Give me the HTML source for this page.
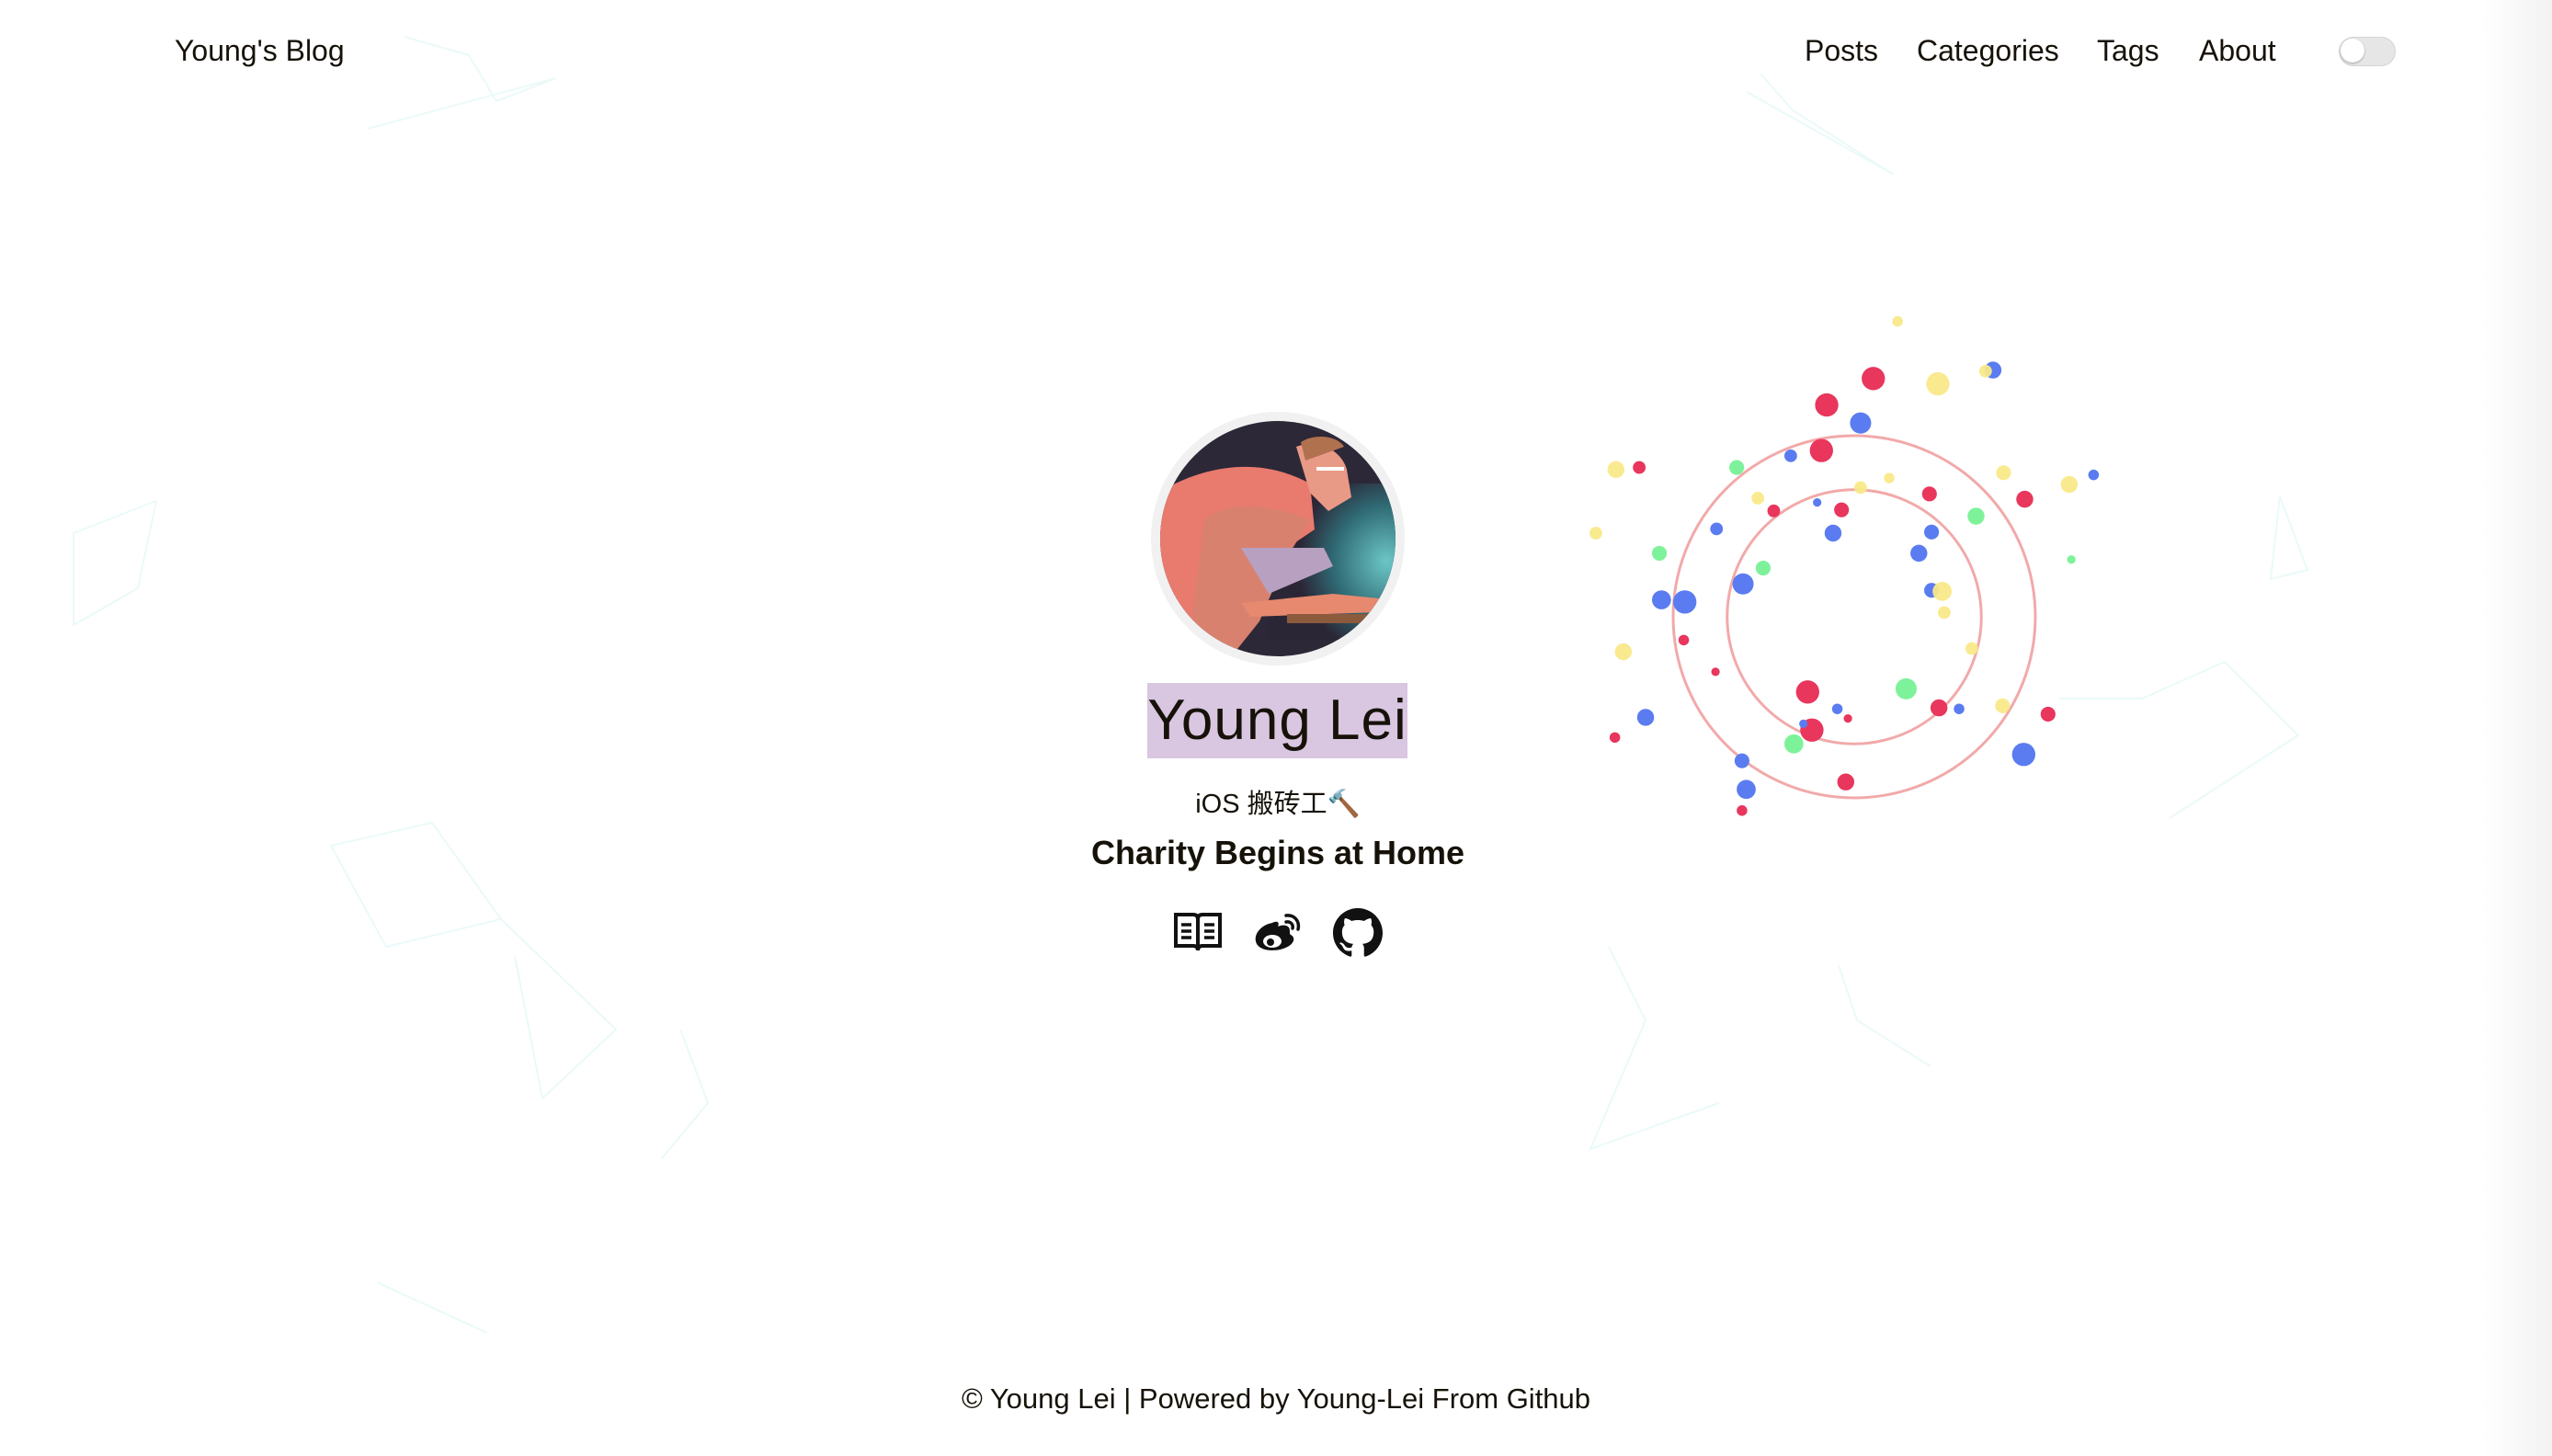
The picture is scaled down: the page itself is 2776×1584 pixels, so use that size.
<!DOCTYPE html>
<html><head><meta charset="utf-8"><style>
html,body{margin:0;padding:0}
body{width:2776px;height:1584px;position:relative;overflow:hidden;background:linear-gradient(90deg,#fff 0,#fff 2700px,#f2f2f2 2776px);font-family:"Liberation Sans","Noto Sans CJK SC",sans-serif;color:#161209}
.t{position:absolute;white-space:nowrap}
.nav{top:37px;font-size:32px;color:#161209}
</style></head><body>
<svg class="t" style="left:0;top:0" width="2776" height="1584">
<g stroke="#e6f8f8" stroke-width="2" fill="none" opacity="0.8">
<path d="M440 40L510 60L540 110L605 85L400 140"/><path d="M80 580L170 545L150 640L80 680Z"/><path d="M360 920L470 895L545 1000L420 1030Z"/>
<path d="M545 1000L670 1120L590 1195L560 1040"/><path d="M2240 760L2330 760L2420 720L2500 800L2360 890"/>
<path d="M1915 80L1950 120L2060 190L1900 100"/><path d="M1750 1030L1790 1110L1730 1250L1870 1200"/><path d="M2000 1050L2020 1110L2100 1160"/>
<path d="M410 1395L530 1450"/><path d="M2480 540L2510 620L2470 630Z"/><path d="M740 1120L770 1200L720 1260"/>
</g>
<g transform="translate(2017,671) scale(1.152) translate(-1975,-647)">
<g fill="none" stroke="#f2a9a9" stroke-width="2.6"><circle cx="1975" cy="647" r="171"/><circle cx="1975" cy="647" r="120"/></g>
<g fill="#e8365d"><circle cx="1993" cy="422" r="11"/><circle cx="1949" cy="447" r="11"/><circle cx="1944" cy="490" r="11"/><circle cx="1772" cy="506" r="6"/><circle cx="1899" cy="547" r="6"/><circle cx="1963" cy="546" r="7"/><circle cx="2046" cy="531" r="7"/><circle cx="2136" cy="536" r="8"/><circle cx="1814" cy="669" r="5"/><circle cx="1844" cy="699" r="4"/><circle cx="1931" cy="718" r="11"/><circle cx="1935" cy="754" r="11"/><circle cx="1969" cy="743" r="4"/><circle cx="2055" cy="733" r="8"/><circle cx="2158" cy="739" r="7"/><circle cx="1749" cy="761" r="5"/><circle cx="1967" cy="803" r="8"/><circle cx="1869" cy="830" r="5"/></g>
<g fill="#5b7cf0"><circle cx="1981" cy="464" r="10"/><circle cx="1915" cy="495" r="6"/><circle cx="2106" cy="414" r="8"/><circle cx="2201" cy="513" r="5"/><circle cx="1940" cy="539" r="4"/><circle cx="1955" cy="568" r="8"/><circle cx="1845" cy="564" r="6"/><circle cx="2048" cy="567" r="7"/><circle cx="2036" cy="587" r="8"/><circle cx="1870" cy="616" r="10"/><circle cx="1793" cy="631" r="9"/><circle cx="1815" cy="633" r="11"/><circle cx="2048" cy="622" r="7"/><circle cx="1959" cy="734" r="5"/><circle cx="1927" cy="748" r="4"/><circle cx="2074" cy="734" r="5"/><circle cx="1778" cy="742" r="8"/><circle cx="2135" cy="777" r="11"/><circle cx="1869" cy="783" r="7"/><circle cx="1873" cy="810" r="9"/></g>
<g fill="#f9e98a" opacity="0.95"><circle cx="2016" cy="368" r="5"/><circle cx="2054" cy="427" r="11"/><circle cx="2099" cy="415" r="6"/><circle cx="1750" cy="508" r="8"/><circle cx="2008" cy="516" r="5"/><circle cx="1981" cy="525" r="6"/><circle cx="2116" cy="511" r="7"/><circle cx="2178" cy="522" r="8"/><circle cx="1884" cy="535" r="6"/><circle cx="1731" cy="568" r="6"/><circle cx="2058" cy="623" r="9"/><circle cx="2060" cy="643" r="6"/><circle cx="1757" cy="680" r="8"/><circle cx="2086" cy="677" r="6"/><circle cx="2115" cy="731" r="7"/></g>
<g fill="#7ef29a"><circle cx="1864" cy="506" r="7"/><circle cx="1791" cy="587" r="7"/><circle cx="1889" cy="601" r="7"/><circle cx="2090" cy="552" r="8"/><circle cx="2180" cy="593" r="4"/><circle cx="2024" cy="715" r="10"/><circle cx="1918" cy="767" r="9"/></g>
</g>
</svg>

<div class="t" style="left:190px;top:37px;font-size:32px">Young's Blog</div>
<div class="t nav" style="left:1963px">Posts</div>
<div class="t nav" style="left:2085px">Categories</div>
<div class="t nav" style="left:2281px">Tags</div>
<div class="t nav" style="left:2392px">About</div>
<div class="t" style="left:2544px;top:40px;width:60px;height:30px;border-radius:16px;background:#e6e6e6;border:1px solid #d4d4d4"></div>
<div class="t" style="left:2546px;top:42px;width:26px;height:26px;border-radius:50%;background:#fff;box-shadow:0 1px 2px rgba(0,0,0,.3)"></div>

<svg class="t" style="left:1250px;top:446px" width="280" height="280" viewBox="0 0 280 280">
<defs><clipPath id="c"><circle cx="140" cy="140" r="128"/></clipPath>
<radialGradient id="g" cx="0.8" cy="0.5" r="0.6"><stop offset="0" stop-color="#6cc6c6"/><stop offset="0.6" stop-color="#2f6a74"/><stop offset="1" stop-color="#2b2636"/></radialGradient></defs>
<circle cx="140" cy="140" r="138" fill="#f1f1f1"/>
<g clip-path="url(#c)"><rect width="280" height="280" fill="#2c2837"/>
<rect x="130" y="80" width="160" height="170" fill="url(#g)"/>
<path d="M10 90C60 60 120 50 175 80L180 130C150 150 120 170 100 200L60 250L10 240Z" fill="#e97a6e"/>
<path d="M60 120C80 100 130 100 175 120L150 160L120 230L80 280L40 280Z" fill="#d9816f"/>
<path d="M100 150L190 150 L200 170L130 200Z" fill="#b7a0c0"/>
<path d="M160 40C185 30 210 45 215 65L220 95L195 110L175 90Z" fill="#e99a86"/>
<path d="M165 35C180 25 205 28 212 40L170 55Z" fill="#b0714f"/>
<rect x="182" y="62" width="30" height="4" fill="#fff"/>
<path d="M100 210L200 200L250 205L250 220L110 225Z" fill="#e7896f"/>
<rect x="150" y="222" width="130" height="10" fill="#8c5a3c"/></g>
</svg>

<div class="t" style="left:1248px;top:743px;width:283px;height:82px;background:#d9c6e0"></div>
<div class="t" style="left:1238px;top:742px;width:303px;text-align:center;font-size:62px;line-height:84px;letter-spacing:1px">Young Lei</div>
<div class="t" style="left:1090px;top:851px;width:600px;text-align:center;font-size:29px">iOS 搬砖工🔨</div>
<div class="t" style="left:1090px;top:907px;width:600px;text-align:center;font-size:36px;font-weight:bold">Charity Begins at Home</div>

<svg class="t" style="left:1276px;top:990px" width="54" height="48" viewBox="0 0 54 48"><path d="M3 5H22Q27 5 27 10V44Q27 39 22 39H3Z M51 5H32Q27 5 27 10V44Q27 39 32 39H51Z" fill="none" stroke="#111" stroke-width="4"/><path d="M9 16H20M9 23H20M9 30H20M34 16H45M34 23H45M34 30H45" stroke="#111" stroke-width="3.5"/></svg>
<svg class="t" style="left:1362px;top:990px" width="56" height="48" viewBox="0 0 56 48"><path d="M22 14C10 16 2 26 4 34C6 44 22 46 34 42C46 38 48 30 42 27C40 26 42 22 40 19C37 15 30 17 28 18C30 14 28 11 22 14Z" fill="#111"/><ellipse cx="22" cy="34" rx="10" ry="7" fill="#fff"/><circle cx="20" cy="35" r="4" fill="#111"/><path d="M37 6C46 5 52 12 50 21M37 13C42 12 45 16 44 20" fill="none" stroke="#111" stroke-width="3.5" stroke-linecap="round"/></svg>
<svg class="t" style="left:1450px;top:988px" width="54" height="54" viewBox="0 0 16 16"><path fill="#111" d="M8 0C3.58 0 0 3.58 0 8c0 3.54 2.29 6.53 5.47 7.59.4.07.55-.17.55-.38 0-.19-.01-.82-.01-1.49-2.01.37-2.53-.49-2.69-.94-.09-.23-.48-.94-.82-1.13-.28-.15-.68-.52-.01-.53.63-.01 1.08.58 1.23.82.72 1.21 1.87.87 2.33.66.07-.52.28-.87.51-1.07-1.78-.2-3.64-.89-3.64-3.95 0-.87.31-1.59.82-2.15-.08-.2-.36-1.02.08-2.12 0 0 .67-.21 2.2.82.64-.18 1.32-.27 2-.27.68 0 1.36.09 2 .27 1.53-1.04 2.2-.82 2.2-.82.44 1.1.16 1.92.08 2.12.51.56.82 1.27.82 2.15 0 3.07-1.87 3.75-3.65 3.95.29.25.54.73.54 1.48 0 1.07-.01 1.93-.01 2.2 0 .21.15.46.55.38A8.013 8.013 0 0016 8c0-4.42-3.58-8-8-8z"/></svg>

<div class="t" style="left:0;top:1504px;width:2776px;text-align:center;font-size:31px">© Young Lei | Powered by Young-Lei From Github</div>
</body></html>
